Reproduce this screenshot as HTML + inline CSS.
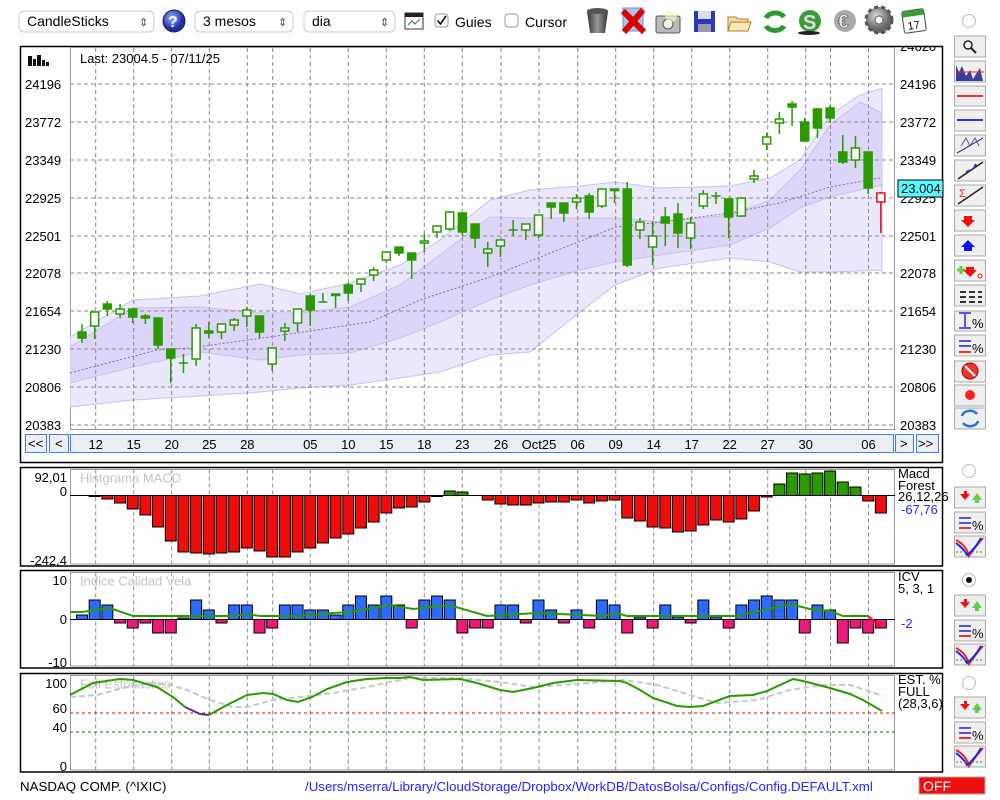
<!DOCTYPE html>
<html><head><meta charset="utf-8"><style>
html,body{margin:0;padding:0;background:#fff;width:1000px;height:800px;overflow:hidden}
svg{display:block;font-family:"Liberation Sans",Arial,sans-serif}
</style></head><body>
<svg id="s" width="1000" height="800" viewBox="0 0 1000 800" xmlns="http://www.w3.org/2000/svg">
<defs>
<clipPath id="plot"><rect x="70" y="48" width="825" height="381"/></clipPath>
<clipPath id="rax"><rect x="896" y="47" width="46" height="385"/></clipPath>
<linearGradient id="trash" x1="0" x2="1"><stop offset="0" stop-color="#333"/><stop offset=".5" stop-color="#999"/><stop offset="1" stop-color="#333"/></linearGradient>
<radialGradient id="help" cx=".4" cy=".35"><stop offset="0" stop-color="#9bb0ff"/><stop offset="1" stop-color="#1c2fa8"/></radialGradient>
<radialGradient id="gear" cx=".4" cy=".35"><stop offset="0" stop-color="#ddd"/><stop offset="1" stop-color="#666"/></radialGradient>
</defs>
<g id="top">
 <rect x="19" y="11" width="135" height="21" rx="5" fill="#fff" stroke="#c9c9c9"/>
 <text x="27" y="26" font-size="14">CandleSticks</text>
 <text x="139" y="26" font-size="11" fill="#444">⇕</text>
 <circle cx="174" cy="21" r="11" fill="url(#help)" stroke="#223"/>
 <text x="168" y="27" font-size="16" font-weight="bold" fill="#fff">?</text>
 <rect x="195" y="11" width="98" height="21" rx="5" fill="#fff" stroke="#c9c9c9"/>
 <text x="203" y="26" font-size="14">3 mesos</text>
 <text x="278" y="26" font-size="11" fill="#444">⇕</text>
 <rect x="304" y="11" width="91" height="21" rx="5" fill="#fff" stroke="#c9c9c9"/>
 <text x="312" y="26" font-size="14">dia</text>
 <text x="380" y="26" font-size="11" fill="#444">⇕</text>
 <rect x="405" y="13" width="18" height="16" fill="#fff" stroke="#333"/>
 <rect x="405" y="13" width="18" height="4" fill="#222"/>
 <path d="M408 25 L412 21 L415 24 L420 19" stroke="#36c" fill="none"/>
 <rect x="435" y="14" width="13" height="13" rx="3" fill="#fff" stroke="#999"/>
 <path d="M437.5 20.5 L440.5 24 L446 16" stroke="#111" stroke-width="1.6" fill="none"/>
 <text x="455" y="27" font-size="14">Guies</text>
 <rect x="505" y="14" width="13" height="13" rx="3" fill="#fff" stroke="#999"/>
 <text x="525" y="27" font-size="14">Cursor</text>
 <path d="M587 11 L608 11 L605 33 L590 33 Z" fill="url(#trash)"/>
 <ellipse cx="597.5" cy="11" rx="10.5" ry="3" fill="#555"/>
 <rect x="623" y="8" width="20" height="23" fill="#aac4ee" stroke="#6f8fd0"/>
 <path d="M623 11 L644 32 M643 10 L624 32" stroke="#d00" stroke-width="6"/>
 <rect x="656" y="16" width="24" height="17" rx="2" fill="#bbb" stroke="#555"/>
 <circle cx="668" cy="24" r="5" fill="#eee" stroke="#555"/>
 <circle cx="671" cy="16" r="6" fill="#ffffcc" opacity=".6"/>
 <rect x="694" y="11" width="21" height="21" fill="#2b38b8"/>
 <rect x="698" y="11" width="13" height="8" fill="#dde"/>
 <rect x="698" y="24" width="13" height="8" fill="#99a"/>
 <path d="M728 17 L736 17 L738 19 L748 19 L748 31 L728 31 Z" fill="#f6dca0" stroke="#b27c2e"/>
 <path d="M731 22 L751 22 L748 31 L728 31 Z" fill="#fbe6b8" stroke="#b27c2e"/>
 <path d="M766 18 A10 8 0 0 1 784 17" stroke="#2a9a2a" stroke-width="5" fill="none"/>
 <path d="M784 26 A10 8 0 0 1 766 26" stroke="#2a9a2a" stroke-width="5" fill="none"/>
 <circle cx="810" cy="21" r="11" fill="#3a9a3a"/>
 <text x="803" y="29" font-size="20" font-weight="bold" fill="#ddd">S</text>
 <ellipse cx="809" cy="33" rx="11" ry="2" fill="#222"/>
 <circle cx="845" cy="21" r="11" fill="#aaa"/>
 <text x="838" y="28" font-size="19" font-weight="bold" fill="#eee" stroke="#555" stroke-width=".6">€</text>
 <circle cx="879" cy="20" r="13" fill="url(#gear)" stroke="#555" stroke-dasharray="4 3" stroke-width="3"/>
 <circle cx="879" cy="20" r="4" fill="#fff" stroke="#555"/>
 <g transform="rotate(-8 914 21)"><rect x="903" y="10" width="22" height="22" rx="2" fill="#fff" stroke="#444"/>
 <rect x="903" y="10" width="22" height="6" fill="#3b9a3b"/>
 <text x="907" y="29" font-size="11">17</text></g>
 <circle cx="969" cy="21" r="6.5" fill="#fff" stroke="#bbb"/>
</g>
<g id="main"></g>
<g id="bottom">
 <text x="20" y="791" font-size="13.3">NASDAQ COMP. (^IXIC)</text>
 <text x="305" y="791" font-size="13.3" fill="#2424ff">/Users/mserra/Library/CloudStorage/Dropbox/WorkDB/DatosBolsa/Configs/Config.DEFAULT.xml</text>
 <rect x="919" y="777" width="66" height="17" fill="#ee1010" stroke="#aaa"/>
 <text x="923" y="791" font-size="14" fill="#fff">OFF</text>
</g>
</svg>
<script>
var G=document.getElementById("main"),out="";
function X(i){return 82+i*12.68}
var VG=[95.7,133.7,171.7,209.3,247.3,272.7,310.3,348.3,386.3,424.3,462.3,501,539,577.7,615.7,653.7,691.7,729.7,767.7,805.7,830.5,868.5];
function vgrid(y1,y2){VG.forEach(function(x){out+='<line x1="'+x+'" y1="'+y1+'" x2="'+x+'" y2="'+y2+'" stroke="#8a8a8a" stroke-dasharray="4 3"/>';});}
out+='<rect x="20.5" y="46.5" width="922" height="416" fill="#fff" stroke="#000" stroke-width="1.5"/>';
out+='<rect x="70.5" y="47.5" width="824" height="382" fill="none" stroke="#999"/>';
var HL=[84,122,160,198,236,273,311,349,387,425],PL=["24196","23772","23349","22925","22501","22078","21654","21230","20806","20383"];
var BX=[70,133,200,260,300,350,400,440,490,530,580,615,660,730,770,800,830,860,882],
U=[337,300,296,284,294,283,265,240,200,190,186,182,188,186,178,160,115,95,88],
IU=[347,308,307,313,313,307,285,255,217,218,218,218,222,215,200,170,125,102,113],
IL=[383,367,352,360,355,353,338,322,300,285,270,262,255,245,228,208,197,190,185],
L=[407,400,396,392,388,385,378,372,355,352,312,285,268,258,262,272,272,271,270];
function poly(a,b){var s="M";for(var i=0;i<BX.length;i++)s+=BX[i]+" "+a[i]+" L";for(var i=BX.length-1;i>=0;i--)s+=BX[i]+" "+b[i]+(i?" L":" Z");return s;}
out+='<g clip-path="url(#plot)">';
out+='<path d="'+poly(U,L)+'" fill="#ebe7fd" stroke="#c8c0ec"/>';
out+='<path d="'+poly(IU,IL)+'" fill="#ddd5fa" stroke="#c8c0ec"/>';
var MA=[[70,373],[157,350],[190,348],[270,337],[370,322],[420,300],[490,277],[616,227],[653,223],[730,213],[780,203],[830,187],[880,178]];
out+='<polyline points="'+MA.map(function(p){return p.join(",")}).join(" ")+'" fill="none" stroke="#7a7298" stroke-dasharray="2 2"/>';
HL.forEach(function(y){out+='<line x1="70" y1="'+y+'" x2="895" y2="'+y+'" stroke="#8a8a8a" stroke-dasharray="4 3"/>';});
vgrid(48,429);
var C=[[332,338,324,343,1],[312,326,312,339,0],[304,309,301,316,1],[309,314,304,318,0],[309,317,309,323,1],[316,318,314,324,1],[318,345,318,349,1],[349,358,349,383,1],[363,363,354,373,2],[328,359,324,366,0],[331,333,322,338,1],[324,332,324,339,0],[320,325,318,331,0],[310,316,307,327,0],[316,332,316,338,1],[348,364,348,371,0],[328,331,323,341,0],[309,323,309,332,0],[296,310,294,326,1],[302,302,293,303,2],[294,295,294,308,1],[285,293,283,301,1],[279,284,279,292,0],[270,275,267,281,0],[252,260,252,263,0],[247,253,247,256,1],[253,260,253,279,1],[241,243,234,252,0],[226,232,225,238,0],[212,229,211,231,0],[213,232,213,236,1],[224,238,224,248,1],[249,253,242,267,0],[240,246,240,257,0],[230,230,220,236,2],[224,230,224,240,0],[215,235,215,238,0],[203,207,203,219,1],[203,213,203,222,1],[198,202,194,209,0],[196,212,193,219,1],[189,206,189,208,0],[189,190,189,203,1],[189,265,182,267,1],[222,230,218,239,0],[236,247,221,265,0],[217,223,207,246,1],[214,233,203,248,1],[223,238,217,249,0],[194,206,190,209,0],[196,196,192,204,2],[199,217,199,238,1],[198,216,198,217,0],[176,179,170,183,0],[137,144,133,150,0],[119,123,112,134,0],[104,107,101,126,1],[122,141,118,141,1],[109,128,108,138,1],[108,118,105,123,1],[152,162,135,164,1],[148,160,136,168,0],[152,188,152,194,1],[193,202,192,233,3]];
C.forEach(function(c,i){var x=X(i),col=c[4]==3?"#e81010":"#2a9a00";
 out+='<line x1="'+x+'" y1="'+c[2]+'" x2="'+x+'" y2="'+c[3]+'" stroke="'+col+'" stroke-width="1.5"/>';
 if(c[4]==2){out+='<line x1="'+(x-4.5)+'" y1="'+c[0]+'" x2="'+(x+4.5)+'" y2="'+c[0]+'" stroke="'+col+'" stroke-width="1.5"/>';}
 else{var h=Math.max(c[1]-c[0],1.5);out+='<rect x="'+(x-4)+'" y="'+c[0]+'" width="8" height="'+h+'" fill="'+(c[4]==1?col:"#fff")+'" stroke="'+col+'" stroke-width="1.5"/>';}
});
out+='</g>';
out+='<text x="80" y="63" font-size="13">Last: 23004.5 - 07/11/25</text>';
[[28,56,4,10],[33,59,3,7],[37,55,4,11],[42,60,3,6],[46,62,3,4]].forEach(function(b){out+='<rect x="'+b[0]+'" y="'+b[1]+'" width="'+b[2]+'" height="'+b[3]+'" fill="#111"/>';});
HL.forEach(function(y,k){out+='<text x="25" y="'+(y+5)+'" font-size="13">'+PL[k]+'</text>';
 out+='<text x="900" y="'+(y+5)+'" font-size="13" clip-path="url(#rax)">'+PL[k]+'</text>';});
out+='<text x="900" y="51" font-size="13" clip-path="url(#rax)">24620</text>';
out+='<rect x="898" y="180" width="45" height="17" fill="#55ffff" stroke="#000"/><text x="901" y="193" font-size="13">23.004,</text>';
out+='<rect x="25.5" y="434.5" width="21" height="18" fill="#eceef3" stroke="#3a7aff"/><text x="28" y="448" font-size="13">&lt;&lt;</text>';
out+='<rect x="49.5" y="434.5" width="19" height="18" fill="#eceef3" stroke="#3a7aff"/><text x="55" y="448" font-size="13">&lt;</text>';
out+='<rect x="70.5" y="434.5" width="823" height="18" fill="#eceef3" stroke="#3a7aff"/>';
out+='<rect x="895.5" y="434.5" width="18" height="18" fill="#eceef3" stroke="#3a7aff"/><text x="900" y="448" font-size="13">&gt;</text>';
out+='<rect x="916.5" y="434.5" width="22" height="18" fill="#eceef3" stroke="#3a7aff"/><text x="918" y="448" font-size="13">&gt;&gt;</text>';
[["12",95.7],["15",133.7],["20",171.7],["25",209.3],["28",247.3],["05",310.3],["10",348.3],["15",386.3],["18",424.3],["23",462.3],["26",501],["Oct25",539],["06",577.7],["09",615.7],["14",653.7],["17",691.7],["22",729.7],["27",767.7],["30",805.7],["06",868.5]].forEach(function(l){out+='<text x="'+l[1]+'" y="449" font-size="13" text-anchor="middle">'+l[0]+'</text>';});
function panel(y1,y2,title){out+='<rect x="20.5" y="'+y1+'" width="922" height="'+(y2-y1)+'" fill="#fff" stroke="#000" stroke-width="1.5"/>';
 out+='<rect x="70.5" y="'+(y1+2)+'" width="824" height="'+(y2-y1-4)+'" fill="none" stroke="#999"/>';vgrid(y1+2,y2-2);
 out+='<text x="80" y="'+(y1+15)+'" font-size="13" fill="#c4c4c4">'+title+'</text>';}
panel(467.5,566,"Histgrama MACD");
var M=[495.5,496.5,499,503,509,515,527,541,552,553,554,553,552,548,551,557,557,552,548,543,538,534,528,522,513,508,507,502,496.5,491,492,495.5,500,504,505,505,503,502,502,500,503,501,500,518,521,527,528,532,531,525,520,522,519,511,497,484,473,474,473,471,482,487,501,513];
M.forEach(function(v,i){if(Math.abs(v-495.5)<.5)return;var x=X(i)-5.5;var g=v<495.5;var y=g?v:495.5,h=Math.abs(v-495.5);
 out+='<rect x="'+x+'" y="'+y+'" width="11" height="'+h+'" fill="'+(g?"#2a9a00":"#ee0d0d")+'" stroke="#000" stroke-width="1"/>';});
out+='<line x1="70" y1="495.5" x2="895" y2="495.5" stroke="#000"/>';
out+='<text x="67" y="482" font-size="13" text-anchor="end">92,01</text><text x="67" y="496" font-size="13" text-anchor="end">0</text><text x="67" y="565" font-size="13" text-anchor="end">-242,4</text>';
out+='<text x="898" y="478" font-size="13">Macd</text><text x="898" y="490" font-size="13">Forest</text><text x="898" y="501" font-size="13">26,12,26</text><text x="901" y="514" font-size="13" fill="#2424ff">-67,76</text>';
panel(570.5,668,"Indice Calidad Vela");
var I=[615,600,605,623,628,623,633,633,618,600,610,623,605,605,633,628,605,605,610,610,615,605,596,605,596,605,628,600,596,600,633,628,628,605,605,623,600,610,623,610,628,600,605,633,617,628,605,617,623,600,617,628,605,600,596,600,600,633,605,610,643,628,633,628];
I.forEach(function(v,i){var x=X(i)-5.5,p=v<619.5;var y=p?v:619.5,h=Math.abs(v-619.5);
 out+='<rect x="'+x+'" y="'+y+'" width="11" height="'+h+'" fill="'+(p?"#2b6bff":"#ee1a78")+'" stroke="#000" stroke-width="1"/>';});
out+='<line x1="70" y1="619.5" x2="895" y2="619.5" stroke="#000"/>';
var IG=[[70,612],[82,612],[110,608],[133,616],[233,616],[247,614],[260,616],[300,616],[333,613],[350,612],[373,608],[390,605],[413,609],[449,605],[487,616],[537,613],[603,616],[617,613],[627,616],[737,616],[790,604],[810,609],[830,611],[843,616],[868,616]];
out+='<polyline points="'+IG.join(" ")+'" fill="none" stroke="#2a9a00" stroke-width="2"/>';
out+='<line x1="868" y1="616" x2="881" y2="627" stroke="#e81010" stroke-width="2"/>';
out+='<text x="67" y="585" font-size="13" text-anchor="end">10</text><text x="67" y="624" font-size="13" text-anchor="end">0</text><text x="67" y="667" font-size="13" text-anchor="end">-10</text>';
out+='<text x="898" y="581" font-size="13">ICV</text><text x="898" y="593" font-size="13">5, 3, 1</text><text x="901" y="628" font-size="13" fill="#2424ff">-2</text>';
panel(673.5,772,"Full Estocastico");
out+='<line x1="70" y1="713" x2="895" y2="713" stroke="#e00" stroke-dasharray="3 3"/><line x1="70" y1="732" x2="895" y2="732" stroke="#070" stroke-dasharray="3 3"/>';
var SG=[[70,697],[97,695],[127,687],[150,683],[170,685],[187,690],[210,700],[233,707],[247,707],[273,700],[300,697],[333,693],[367,687],[390,682],[410,678],[457,678],[500,682],[533,687],[577,684],[623,680],[657,685],[690,695],[717,703],[757,700],[790,690],[823,685],[850,685],[883,696]];
out+='<polyline points="'+SG.join(" ")+'" fill="none" stroke="#c8c8c8" stroke-width="2" stroke-dasharray="6 3"/>';
var S1=[[70,695],[93,683],[120,679],[133,680],[157,687],[173,697],[185,707]],S2=[[185,707],[200,714],[209,715]],S3=[[209,715],[227,705],[247,695],[263,693],[273,694],[287,700],[298,702],[312,697],[327,689],[347,682],[367,679],[387,678],[400,678],[410,677],[423,680],[460,679],[477,683],[500,690],[513,692],[533,688],[553,683],[577,680],[620,681],[627,683],[640,690],[653,698],[677,706],[690,707],[703,706],[730,696],[753,695],[767,691],[793,679],[803,681],[830,688],[850,694],[863,700],[882,711]];
out+='<polyline points="'+S1.join(" ")+'" fill="none" stroke="#2a9a00" stroke-width="2"/><polyline points="'+S2.join(" ")+'" fill="none" stroke="#5030a0" stroke-width="2"/><polyline points="'+S3.join(" ")+'" fill="none" stroke="#2a9a00" stroke-width="2"/>';
out+='<text x="67" y="688" font-size="13" text-anchor="end">100</text><text x="67" y="713" font-size="13" text-anchor="end">60</text><text x="67" y="732" font-size="13" text-anchor="end">40</text><text x="67" y="771" font-size="13" text-anchor="end">0</text>';
out+='<text x="898" y="684" font-size="13">EST. %</text><text x="898" y="696" font-size="13">FULL</text><text x="898" y="708" font-size="13">(28,3,6)</text>';
function btn(y,h,inner){out+='<rect x="954.5" y="'+y+'" width="31" height="'+h+'" fill="#efefef" stroke="#aaa"/>'+(inner||"");}
btn(36,21,'<circle cx="968" cy="45" r="4" fill="#fff" stroke="#222" stroke-width="1.5"/><line x1="971" y1="48" x2="976" y2="53" stroke="#222" stroke-width="2"/>');
btn(61,21,'<path d="M956 81 L956 65 L959 72 L962 66 L966 76 L970 70 L973 79 L976 74 L980 68 L983 81 Z" fill="#3a3f9a"/><path d="M956 72 L984 72" stroke="#e22" stroke-width="1"/>');
btn(86,20,'<line x1="957" y1="96" x2="983" y2="96" stroke="#e33" stroke-width="2"/>');
btn(110,21,'<line x1="957" y1="120" x2="983" y2="120" stroke="#33e" stroke-width="2"/>');
btn(135,21,'<path d="M957 153 L983 138 M961 146 L966 138 L970 146 L975 138 L979 146" stroke="#55c" fill="none"/><line x1="957" y1="153" x2="983" y2="138" stroke="#333"/>');
btn(160,21,'<line x1="958" y1="179" x2="983" y2="162" stroke="#222" stroke-width="1.5"/><path d="M966 172 L971 170 M974 168 L976 164" stroke="#33c" stroke-width="2"/>');
btn(185,21,'<line x1="958" y1="204" x2="983" y2="187" stroke="#222" stroke-width="1.5"/><text x="959" y="197" font-size="11" fill="#e22">Σ</text>');
btn(210,21,'<path d="M964 216 L972 216 L972 220 L975 220 L968 227 L961 220 L964 220 Z" fill="#e11"/>');
btn(235,21,'<path d="M964 251 L972 251 L972 247 L975 247 L968 240 L961 247 L964 247 Z" fill="#11e"/>');
btn(260,21,'<path d="M957 270 L965 270 M961 266 L961 274" stroke="#6c4" stroke-width="3"/><path d="M966 267 L974 267 L974 270 L977 270 L970 277 L963 270 L966 270 Z" fill="#e11"/><circle cx="980" cy="276" r="2" fill="none" stroke="#e11"/>');
btn(285,21,'<path d="M960 292 H966 M969 292 H975 M978 292 H982 M960 297 H966 M969 297 H975 M978 297 H982 M960 302 H966 M969 302 H975 M978 302 H982" stroke="#333" stroke-width="2"/>');
btn(311,20,'<path d="M959 313 H971 M959 328 H971 M965 314 V327" stroke="#22e" stroke-width="1.5"/><text x="972" y="328" font-size="13">%</text>');
btn(335,21,'<path d="M959 341 H971 M959 346 H971" stroke="#22c" stroke-width="1.5"/><path d="M959 352 H971" stroke="#e33" stroke-width="2"/><text x="972" y="353" font-size="13">%</text>');
btn(361,21,'<circle cx="970" cy="371" r="8" fill="#e33" stroke="#a00"/><line x1="965" y1="366" x2="975" y2="376" stroke="#fff" stroke-width="2"/>');
btn(385,21,'<circle cx="970" cy="395" r="5" fill="#f22"/>');
btn(408,21,'<path d="M962 416 A8 6 0 0 1 977 414 M978 421 A8 6 0 0 1 963 423" stroke="#27d" stroke-width="2.5" fill="none"/>');
function grp(r){out+='<circle cx="969" cy="'+r+'" r="6.5" fill="#fff" stroke="#bbb"/>';}
function sub(y){btn(y,21,'<path d="M960 '+(y+7)+' H964 V'+(y+4)+' H967 V'+(y+7)+' H970 L965 '+(y+13)+' Z" fill="#e11"/><path d="M972 '+(y+13)+' L977 '+(y+6)+' L982 '+(y+13)+' Z" fill="#6c4"/><rect x="975" y="'+(y+12)+'" width="4" height="4" fill="#6c4"/>');
 btn(y+25,21,'<path d="M959 '+(y+31)+' H971 M959 '+(y+36)+' H971" stroke="#22c" stroke-width="1.5"/><path d="M959 '+(y+41)+' H971" stroke="#e33" stroke-width="2"/><text x="972" y="'+(y+43)+'" font-size="13">%</text>');
 btn(y+49,21,'<path d="M956 '+(y+53)+' Q966 '+(y+58)+' 969 '+(y+69)+' Q975 '+(y+60)+' 983 '+(y+51)+'" stroke="#e22" stroke-width="2" fill="none"/><path d="M956 '+(y+56)+' Q964 '+(y+62)+' 967 '+(y+68)+' Q975 '+(y+62)+' 981 '+(y+51)+'" stroke="#22e" stroke-width="2" fill="none"/><line x1="956" y1="'+(y+65)+'" x2="984" y2="'+(y+65)+'" stroke="#393" stroke-dasharray="2 2"/>');}
grp(471);sub(487);
out+='<circle cx="969" cy="580" r="6.5" fill="#fff" stroke="#bbb"/><circle cx="969" cy="580" r="3" fill="#111"/>';sub(595);
grp(683);sub(697);
G.innerHTML=out;
</script>
</body></html>
